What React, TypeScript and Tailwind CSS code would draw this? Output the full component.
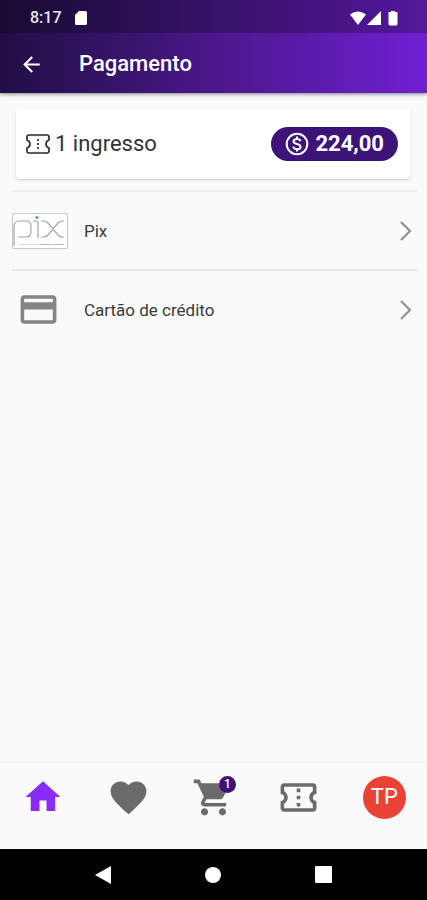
import type { ReactNode } from "react";
import { MdArrowBack, MdCreditCard, MdFavorite, MdHome, MdOutlineConfirmationNumber, MdShoppingCart } from "react-icons/md";

function StatusBar() {
  return (
    <div className="flex h-[33px] items-center justify-between bg-black/25 pl-[30px] pr-7 pt-[3px] text-white">
      <div className="flex items-center gap-3">
        <span className="text-base font-medium text-white/90">8:17</span>
        <svg width="14" height="14" viewBox="0 0 14 14" fill="currentColor">
          <path d="M5 0h6.5A1.5 1.5 0 0 1 13 1.500v11a1.500 1.500 0 0 1-1.500 1.500h-9A1.500 1.500 0 0 1 1 12.500V4z" />
        </svg>
      </div>
      <svg width="50" height="16" viewBox="0 0 50 16" fill="currentColor">
        <path d="M1 4.500Q9-1.500 17 4.500L9 15z" />
        <path d="M32 1v14H18z" />
        <path d="M42 1h4v1h2.500v12a1.500 1.500 0 0 1-1.500 1.500h-6a1.500 1.500 0 0 1-1.500-1.500V2H42z" />
      </svg>
    </div>
  );
}

function TicketIcon() {
  return (
    <svg width="24" height="20" viewBox="0 0 24 20" fill="none" stroke="#2b2b2b" strokeWidth="1.700">
      <path d="M2.800 1h18.400a1.800 1.800 0 0 1 1.800 1.800V6q-3 1-3 4t3 4v3.200a1.800 1.800 0 0 1-1.800 1.800H2.800A1.800 1.800 0 0 1 1 17.200V14q3-1 3-4T1 6V2.800A1.800 1.800 0 0 1 2.800 1z" />
      <path d="M12 5v2M12 9v2M12 13v2" />
    </svg>
  );
}

function DollarIcon() {
  return (
    <svg width="24" height="24" viewBox="0 0 24 24" fill="none" stroke="#fff" strokeWidth="2">
      <circle cx="12" cy="12" r="10.300" />
      <path d="M15.500 9.200C15.200 7.600 13.900 6.900 12 6.900c-2.100 0-3.500 1-3.500 2.500 0 1.700 1.700 2.100 3.500 2.600s3.600 1 3.600 2.700c0 1.500-1.500 2.500-3.600 2.500-2.200 0-3.500-1-3.700-2.700M12 4.500V7M12 17v2.500" />
    </svg>
  );
}

function PixLogo() {
  return (
    <svg width="56" height="36" viewBox="0 0 56 36" fill="none" stroke="#a3a3a3" strokeWidth="1.200">
      <rect x="0.500" y="0.500" width="55" height="35" rx="1.500" fill="#fff" stroke="#c8c8c8" />
      <path d="M2 33V14q0-6 6-6h6q5 0 5 5v6q0 5-5 5H6" />
      <path d="M21 8h3q2 0 2 2v15" />
      <path d="M29 8h3q2 0 4 2l10 12q2 2 4 2h2M29 24h3q2 0 4-2L46 10q2-2 4-2h2" />
      <path d="M25 2.500l2 2-2 2-2-2z" fill="#4cae98" stroke="none" />
      <path d="M6 31.500h20" stroke="#ddd" />
      <path d="M27 31.500h25" stroke="#bbb" strokeDasharray="12 1" />
    </svg>
  );
}

function Chevron() {
  return (
    <svg width="12" height="20" viewBox="0 0 12 20" fill="none" stroke="#929292" strokeWidth="2.200">
      <path d="M1 1l9 9-9 9" />
    </svg>
  );
}

function PaymentRow({ icon, label }: { icon: ReactNode; label: string }) {
  return (
    <button type="button" className="flex h-[77px] w-full items-center pr-[5px] text-left">
      <span className="flex w-[72px] items-center">{icon}</span>
      <span className="flex-1 text-[17px] leading-6 text-[#3a3a3a]">{label}</span>
      <Chevron />
    </button>
  );
}

export default function App() {
  return (
    <div className="flex min-h-screen flex-col bg-[#fafafa] font-['Roboto',sans-serif]">
      <header className="relative bg-linear-to-r from-[#200e45] via-[#4b178b] to-[#701fd3] shadow-[0_1px_4px_rgba(0,0,0,0.5)]">
        <StatusBar />
        <div className="flex h-[60px] items-center gap-[35px] pl-[19px] pt-[2px] text-white">
          <button type="button" aria-label="Voltar">
            <MdArrowBack size={25} />
          </button>
          <h1 className="text-[22px] font-medium leading-7">Pagamento</h1>
        </div>
      </header>

      <main className="flex-1 px-3 pt-4">
        <section className="mx-1 flex h-[70px] items-center justify-between rounded-sm bg-white px-[10px] shadow-[0_1px_2px_rgba(0,0,0,0.2)]">
          <div className="flex items-center gap-[5px]">
            <TicketIcon />
            <span className="text-[22px] leading-7 text-[#333]">1 ingresso</span>
          </div>
          <div className="mr-[3px] flex h-[34px] items-center gap-[6px] rounded-full bg-[#3e1378] px-[14px] text-white">
            <DollarIcon />
            <span className="text-[22px] font-bold leading-7">224,00</span>
          </div>
        </section>

        <ul className="-mr-[2px] mt-[11px]">
          <li className="border-t-2 border-[#efefef]">
            <PaymentRow icon={<PixLogo />} label="Pix" />
          </li>
          <li className="border-t-2 border-[#e8e8e8]">
            <PaymentRow icon={<MdCreditCard size={43} color="#858585" className="ml-[5px]" />} label="Cartão de crédito" />
          </li>
        </ul>
      </main>

      <nav className="grid h-[87px] grid-cols-5 items-center justify-items-center border-t border-[#f3f3f3] pb-[18px] text-[#6b6b6b]">
        <button type="button" aria-label="Início">
          <MdHome size={42} color="#8a2cf8" />
        </button>
        <button type="button" aria-label="Favoritos">
          <MdFavorite size={43} />
        </button>
        <button type="button" aria-label="Carrinho" className="relative">
          <MdShoppingCart size={43} />
          <span className="absolute -right-px top-0 flex size-[17px] items-center justify-center rounded-full bg-[#3e1378] text-xs font-medium leading-4 text-white">1</span>
        </button>
        <button type="button" aria-label="Ingressos">
          <MdOutlineConfirmationNumber size={43} />
        </button>
        <button type="button" className="flex size-[43px] items-center justify-center rounded-full bg-[#e94335] text-[22px] leading-7 text-white">TP</button>
      </nav>

      <div className="flex h-[51px] items-center justify-center gap-[94px] bg-black text-white">
        <button type="button" aria-label="Voltar">
          <svg width="16" height="18" viewBox="0 0 16 18" fill="currentColor">
            <path d="M16 0v18L0 9z" />
          </svg>
        </button>
        <button type="button" aria-label="Tela inicial" className="size-4 rounded-full bg-white" />
        <button type="button" aria-label="Aplicativos recentes" className="size-[17px] rounded-[1px] bg-white" />
      </div>
    </div>
  );
}
